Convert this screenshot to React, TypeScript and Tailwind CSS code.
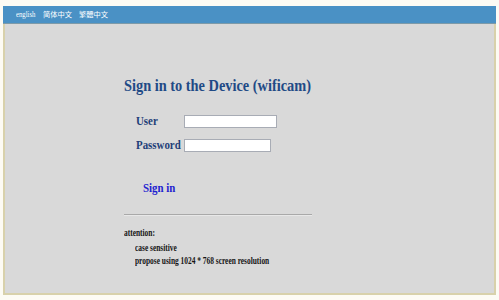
import React from "react";

export default function App() {
  const serif = { fontFamily: '"Liberation Serif", "Noto Sans CJK SC", serif' };
  const sx = "inline-block origin-left scale-x-[0.87] whitespace-nowrap";
  const sxs = "inline-block origin-left scale-x-[0.78] whitespace-nowrap";
  return (
    <div className="w-[499px] h-[300px] bg-[#fdfbf4] pt-[6px] pl-[3px]" style={serif}>
      <div className="w-[493px] flex flex-col">
        <div className="h-[18px] bg-[#4a91c5] border-b border-[#7d9aa8] flex items-center pl-[13px] gap-[7px] text-white text-[7.5px]">
          <span className="w-[20px] inline-block origin-left scale-x-[0.9] whitespace-nowrap">english</span>
          <span style={{ fontFamily: '"Noto Sans CJK SC", sans-serif' }} className="text-[7.25px]">简体中文</span>
          <span style={{ fontFamily: '"Noto Sans CJK TC", sans-serif' }} className="text-[7.25px]">繁體中文</span>
        </div>
        <div className="h-[271px] bg-[#d9d9d9] border-x-2 border-b-2 border-[#d8d1ab] pl-[119px] flex flex-col">
          <div className="mt-[52px] text-[16.5px] font-bold text-[#1f4a86] leading-[20px]">
            <span className={sx}>Sign in to the Device (wificam)</span>
          </div>
          <div className="mt-[19px] pl-[12px] flex flex-col gap-[11px]">
            <div className="flex items-center h-[13px]">
              <span className="w-[48px] text-[12.5px] font-bold text-[#1f3f78]">
                <span className={sx}>User</span>
              </span>
              <div className="w-[93px] h-[13px] bg-white border border-[#a8acb5]" />
            </div>
            <div className="flex items-center h-[13px]">
              <span className="w-[48px] text-[12.5px] font-bold text-[#1f3f78]">
                <span className={sx}>Password</span>
              </span>
              <div className="w-[87px] h-[13px] bg-white border border-[#a8acb5]" />
            </div>
          </div>
          <div className="mt-[28px] pl-[19px] text-[12.5px] font-bold text-[#1f1fd0] leading-[16px]">
            <span className={sx}>Sign in</span>
          </div>
          <div className="mt-[18px] w-[188px] h-[2px] border-t border-[#a9a9a9] border-b border-b-[#e8e8e8]" />
          <div className="mt-[11px] text-[9.5px] font-bold text-[#151515] leading-[12px]">
            <span className={sxs}>attention:</span>
          </div>
          <div className="mt-[3px] pl-[11px] flex flex-col items-start text-[9.5px] font-bold text-[#151515] leading-[13px]">
            <span className={sxs}>case sensitive</span>
            <span className={sxs}>propose using 1024 * 768 screen resolution</span>
          </div>
        </div>
      </div>
    </div>
  );
}
